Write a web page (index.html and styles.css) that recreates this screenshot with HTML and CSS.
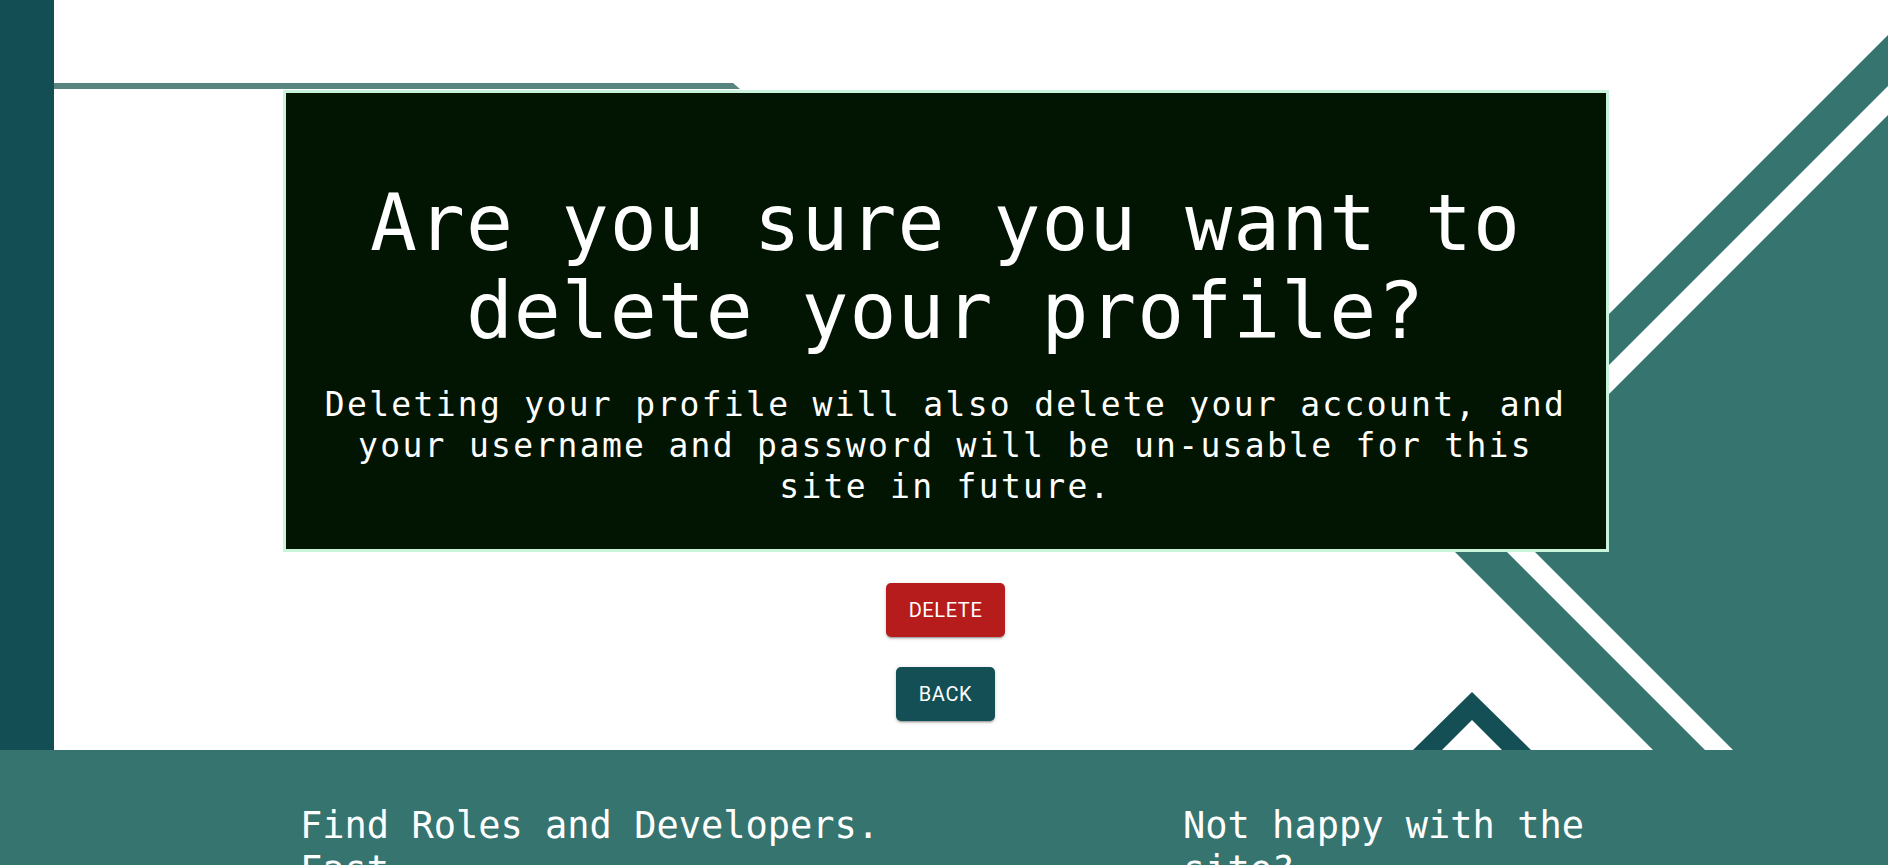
FILE: index.html
```html
<!DOCTYPE html>
<html lang="en">
<head>
<meta charset="utf-8">
<title>Delete profile</title>
<link rel="stylesheet" href="styles.css">
</head>
<body>
<main class="page">
  <svg class="deco" width="1888" height="750" viewBox="0 0 1888 750" aria-hidden="true">
    <polygon class="deco-line" points="54,83 733,83 740,89 54,89"/>
    <polygon class="deco-teal" points="1888,35 1413,510 1653,750 1888,750"/>
    <polygon class="deco-white" points="1888,86 1464.5,509.5 1705,750 1888,750"/>
    <polygon class="deco-teal" points="1888,115 1493,510 1733,750 1888,750"/>
    <path class="deco-dark" d="M1413 750 L1472 692 L1531 750 L1502 750 L1472 720 L1442 750 Z"/>
  </svg>
  <aside class="rail"></aside>
  <section class="stage">
    <div class="dialog">
      <h1 class="dialog-title">Are you sure you want to delete your profile?</h1>
      <p class="dialog-text">Deleting your profile will also delete your account, and your username and password will be un-usable for this site in future.</p>
    </div>
    <button class="btn btn-danger" type="button">Delete</button>
    <button class="btn btn-back" type="button">Back</button>
  </section>
</main>
<footer class="footer">
  <div class="footer-col footer-left">Find Roles and Developers. Fast.</div>
  <div class="footer-col footer-right">Not happy with the site?</div>
</footer>
</body>
</html>
```

FILE: styles.css
```css
html, body {
  margin: 0;
  padding: 0;
  background: #ffffff;
}

body {
  font-family: "DejaVu Sans Mono", "Liberation Mono", monospace;
  width: 1888px;
  overflow: hidden;
}

.page {
  position: relative;
  display: flex;
  height: 750px;
  background: #ffffff;
}

.deco {
  position: absolute;
  left: 0;
  top: 0;
  z-index: 0;
}

.deco-line { fill: #598581; }
.deco-teal { fill: #35746f; }
.deco-white { fill: #ffffff; }
.deco-dark { fill: #134f55; }

.rail {
  flex: 0 0 54px;
  background: #134e55;
  position: relative;
  z-index: 1;
}

.stage {
  flex: 1;
  position: relative;
  z-index: 1;
  display: flex;
  flex-direction: column;
  align-items: center;
  padding: 90px 51px 0 0;
}

.dialog {
  box-sizing: border-box;
  width: 1326px;
  border: 3px solid #c9f3da;
  background: #021502;
  padding: 86px 30px 42px;
  color: #ffffff;
  text-align: center;
}

.dialog-title {
  margin: 0;
  font-weight: normal;
  font-size: 78px;
  line-height: 88px;
  letter-spacing: 1px;
}

.dialog-text {
  margin: 29px 0 0;
  font-size: 33px;
  line-height: 41px;
  letter-spacing: 2.3px;
}

.btn {
  font-family: Roboto, "Liberation Sans", sans-serif;
  font-weight: 400;
  font-size: 20px;
  line-height: 36px;
  letter-spacing: 0.6px;
  text-transform: uppercase;
  color: #ffffff;
  border: none;
  border-radius: 5px;
  padding: 9px 23px;
  box-shadow: 0px 3px 1px -2px rgba(0,0,0,0.2), 0px 2px 2px 0px rgba(0,0,0,0.14), 0px 1px 5px 0px rgba(0,0,0,0.12);
}

.btn-danger {
  background: #b71c1c;
  margin-top: 31px;
}

.btn-back {
  background: #134f55;
  margin-top: 30px;
}

.footer {
  background: #35746f;
  color: #ffffff;
  display: grid;
  grid-template-columns: 620px 480px;
  column-gap: 263px;
  padding: 54px 0 80px 300px;
  font-size: 37px;
  line-height: 44px;
}
```
